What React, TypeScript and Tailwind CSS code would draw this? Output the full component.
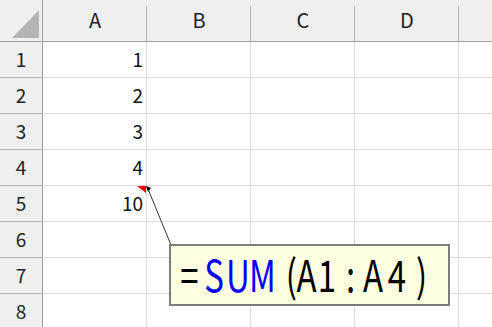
import React from "react";

const cols = ["A", "B", "C", "D", ""];
const colW = ["w-[104px]", "w-[104px]", "w-[104px]", "w-[104px]", "w-[33px]"];
const values: (string | null)[] = ["1", "2", "3", "4", "10", null, null, null];

// formula glyphs on their own cells: [char, cell classes, blue?]
const formula: [string, string, boolean][] = [
  ["=", "w-[25px] justify-center", false],
  ["S", "w-[24px] justify-center", true],
  ["U", "w-[24px] justify-center", true],
  ["M", "w-[25px] justify-center", true],
  ["(", "w-[22px] justify-end", false],
  ["A", "w-[19px] justify-center", false],
  ["1", "w-[22px] justify-center", false],
  [":", "w-[25px] justify-center", false],
  ["A", "w-[20px] justify-center", false],
  ["4", "w-[28px] justify-center", false],
  [")", "w-[17px] justify-start pl-[5px]", false],
];

function HeaderRow() {
  return (
    <div className="flex h-[42px] bg-[#efefef] border-b border-[#9f9f9f]">
      <div className="relative w-[43px] h-full shrink-0 border-r border-[#9f9f9f]">
        <svg className="absolute left-[12px] top-[10px]" width="27" height="28" viewBox="0 0 27 28">
          <polygon points="27,0 27,28 0,28" fill="#b4b4b4" />
        </svg>
      </div>
      {cols.map((c, i) => (
        <div
          key={i}
          className={`${colW[i]} shrink-0 flex items-center justify-center text-[20px] text-[#222] pb-[1px]`}
        >
          {c}
        </div>
      ))}
    </div>
  );
}

function Separators() {
  // thin vertical dividers inside the column header, starting a few px below the top
  return (
    <>
      {[146, 250, 354, 458].map((x) => (
        <div key={x} className="absolute top-[6px] h-[35px] w-px bg-[#b2b2b2]" style={{ left: x }} />
      ))}
    </>
  );
}

function BodyRow({ n, v }: { n: number; v: string | null }) {
  return (
    <div className="flex h-[36px]">
      <div className="w-[43px] h-full shrink-0 bg-[#efefef] border-r border-b border-r-[#9f9f9f] border-b-[#b4b4b4] flex items-center justify-center text-[19px] text-[#222]">
        {n}
      </div>
      {cols.map((_, i) => (
        <div
          key={i}
          className={`${colW[i]} h-full shrink-0 border-b ${i < 4 ? "border-r" : ""} border-[#dadada] flex items-center justify-end pr-[3px] text-[19px] text-[#111]`}
        >
          {i === 0 && v}
        </div>
      ))}
    </div>
  );
}

export default function App() {
  return (
    <div
      className="relative w-[492px] h-[327px] overflow-hidden bg-white"
      style={{ fontFamily: '"Noto Sans CJK JP", "Noto Sans", sans-serif' }}
    >
      <HeaderRow />
      <Separators />
      {values.map((v, i) => (
        <BodyRow key={i} n={i + 1} v={v} />
      ))}

      {/* comment indicator and leader arrow */}
      <svg className="absolute left-0 top-0" width="492" height="327">
        <polygon points="137,186 146,186 146,193" fill="#ff0000" />
        <line x1="148" y1="189" x2="171" y2="245" stroke="#333" strokeWidth="1" />
        <polygon points="146,186 151,188 148,192" fill="#000" />
      </svg>

      {/* comment box */}
      <div className="absolute left-[169px] top-[244px] w-[281px] h-[62px] bg-[#ffffe1] border-2 border-[#7c7c7c] flex items-center pl-[6px]">
        <div className="flex items-center text-[33px] leading-none text-black pb-[2px]">
          {formula.map(([ch, cls, blue], i) => (
            <div key={i} className={`${cls} shrink-0 flex`}>
              <span className={`inline-block scale-y-[1.33] ${blue ? "text-[#0000ff]" : ""}`}>{ch}</span>
            </div>
          ))}
        </div>
      </div>
    </div>
  );
}
